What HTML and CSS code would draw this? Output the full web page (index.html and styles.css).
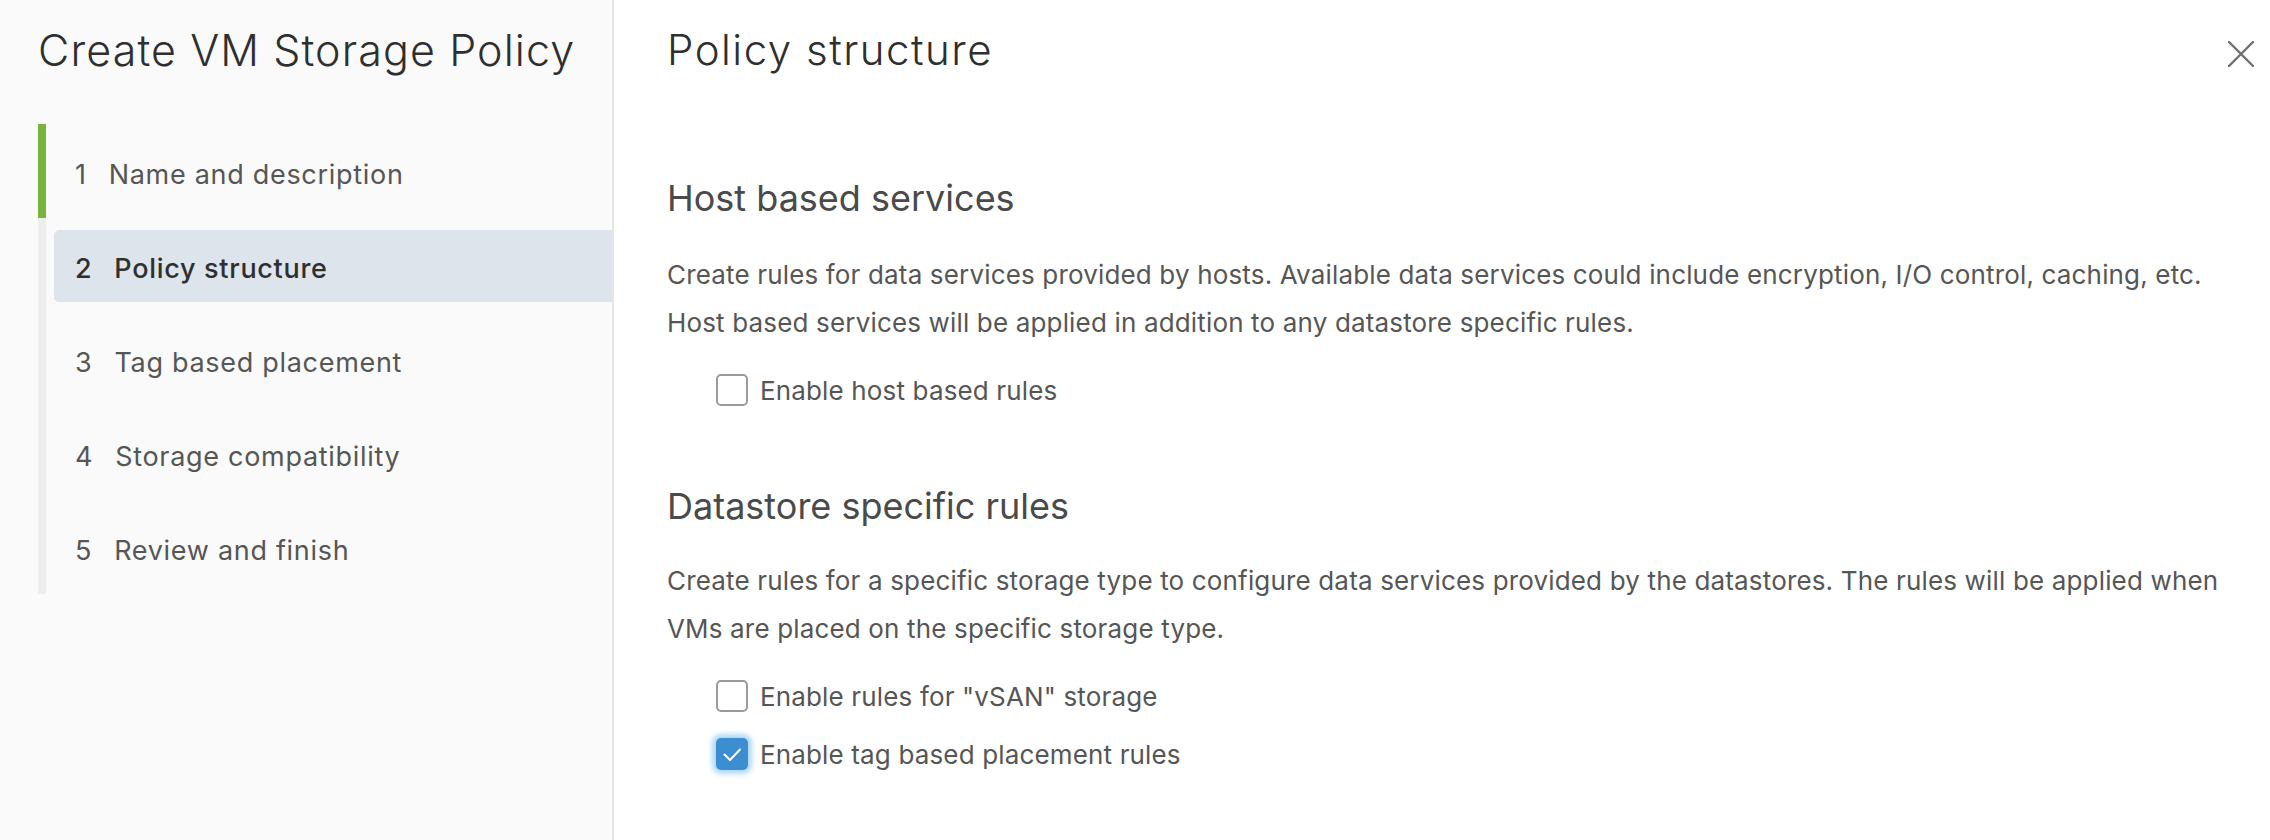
FILE: index.html
```html
<!DOCTYPE html>
<html lang="en">
<head>
<meta charset="utf-8">
<title>Create VM Storage Policy</title>
<link rel="stylesheet" href="styles.css">
</head>
<body>
<div class="wizard">
  <aside class="sidebar">
    <h1 class="wizard-title">Create VM Storage Policy</h1>
    <ol class="steps">
      <li class="step done"><div class="step-btn"><span class="num">1</span><span class="label">Name and description</span></div></li>
      <li class="step current"><div class="step-btn"><span class="num">2</span><span class="label">Policy structure</span></div></li>
      <li class="step"><div class="step-btn"><span class="num">3</span><span class="label">Tag based placement</span></div></li>
      <li class="step"><div class="step-btn"><span class="num">4</span><span class="label">Storage compatibility</span></div></li>
      <li class="step"><div class="step-btn"><span class="num">5</span><span class="label">Review and finish</span></div></li>
    </ol>
  </aside>
  <main class="content">
    <header class="page-header">
      <h2 class="page-title">Policy structure</h2>
      <button class="close" aria-label="Close">
        <svg viewBox="0 0 26 26" width="26" height="26"><path d="M1 1 L25 25 M25 1 L1 25" stroke="#6f6f6f" stroke-width="2.4" fill="none" stroke-linecap="round"/></svg>
      </button>
    </header>

    <section class="section first">
      <h3 class="section-title">Host based services</h3>
      <p class="desc">Create rules for data services provided by hosts. Available data services could include encryption, I/O control, caching, etc. Host based services will be applied in addition to any datastore specific rules.</p>
      <div class="option"><span class="box"></span><span class="opt-label">Enable host based rules</span></div>
    </section>

    <section class="section second">
      <h3 class="section-title">Datastore specific rules</h3>
      <p class="desc">Create rules for a specific storage type to configure data services provided by the datastores. The rules will be applied when VMs are placed on the specific storage type.</p>
      <div class="option"><span class="box"></span><span class="opt-label">Enable rules for "vSAN" storage</span></div>
      <div class="option next"><span class="box checked"><svg viewBox="0 0 32 32" width="32" height="32"><path d="M8.5 16.5 L14 22 L24 11.5" stroke="#ffffff" stroke-width="2" fill="none" stroke-linecap="round" stroke-linejoin="round"/></svg></span><span class="opt-label">Enable tag based placement rules</span></div>
    </section>
  </main>
</div>
</body>
</html>
```

FILE: styles.css
```css
* { box-sizing: border-box; }
html, body {
  margin: 0;
  padding: 0;
  height: 100%;
  background: #ffffff;
}
body {
  font-family: "Inter", "Lato", "Liberation Sans", sans-serif;
  color: #565656;
}
.wizard {
  display: flex;
  width: 2270px;
  height: 840px;
}
.sidebar {
  width: 614px;
  flex: none;
  background: #fafafa;
  border-right: 2px solid #e6e6e6;
  padding-top: 24px;
}
.wizard-title {
  margin: 0 0 48px 38px;
  font-size: 43px;
  line-height: 52px;
  font-weight: 300;
  letter-spacing: 1.1px;
  color: #2f2f2f;
  white-space: nowrap;
}
.steps {
  list-style: none;
  margin: 0 0 0 38px;
  padding: 0;
  border-left: 8px solid #eeeeee;
}
.step {
  height: 94px;
  padding-top: 12px;
  margin-left: -8px;
  padding-left: 8px;
  border-left: 8px solid transparent;
}
.step.done {
  border-left-color: #77b53c;
}
.step-btn {
  height: 72px;
  padding: 4px 0 0 21px;
  display: flex;
  align-items: center;
  font-size: 27px;
  letter-spacing: 0.7px;
  color: #565656;
  border-radius: 5px 0 0 5px;
  white-space: nowrap;
}
.step.current .step-btn {
  background: #dde4eb;
  color: #2f2f2f;
  font-weight: 500;
}
.num {
  margin-right: 22px;
}
.content {
  flex: 1;
  padding: 24px 16px 0 53px;
}
.page-header {
  display: flex;
  justify-content: space-between;
  align-items: flex-start;
}
.page-title {
  margin: 0;
  font-size: 42px;
  line-height: 52px;
  font-weight: 300;
  letter-spacing: 1.5px;
  color: #2f2f2f;
}
.close {
  margin-top: 17px;
  padding: 0;
  border: 0;
  background: none;
  width: 26px;
  height: 26px;
  display: block;
}
.close svg { display: block; }
.section-title {
  margin: 0;
  font-size: 36px;
  line-height: 44px;
  font-weight: 400;
  color: #4a4a4a;
}
.section.first { margin-top: 100px; }
.section.second { margin-top: 74px; }
.desc {
  margin: 31px 0 0 0;
  max-width: 1570px;
  font-size: 26px;
  line-height: 48px;
  letter-spacing: 0.16px;
  color: #565656;
}
.section.second .desc { margin-top: 29px; }
.option {
  margin: 23px 0 0 49px;
  height: 40px;
  display: flex;
  align-items: center;
}
.option.next { margin-top: 18px; }
.box {
  width: 32px;
  height: 32px;
  border: 2px solid #9a9a9a;
  border-radius: 5px;
  background: #ffffff;
  flex: none;
  margin-right: 12px;
  position: relative;
}
.box.checked {
  border: 0;
  background: #3d8ed1;
  box-shadow: 0 0 5px 4px rgba(110, 185, 240, 0.55);
}
.box.checked svg { display: block; }
.opt-label {
  font-size: 26px;
  letter-spacing: 0.15px;
  color: #565656;
  white-space: nowrap;
}
```
